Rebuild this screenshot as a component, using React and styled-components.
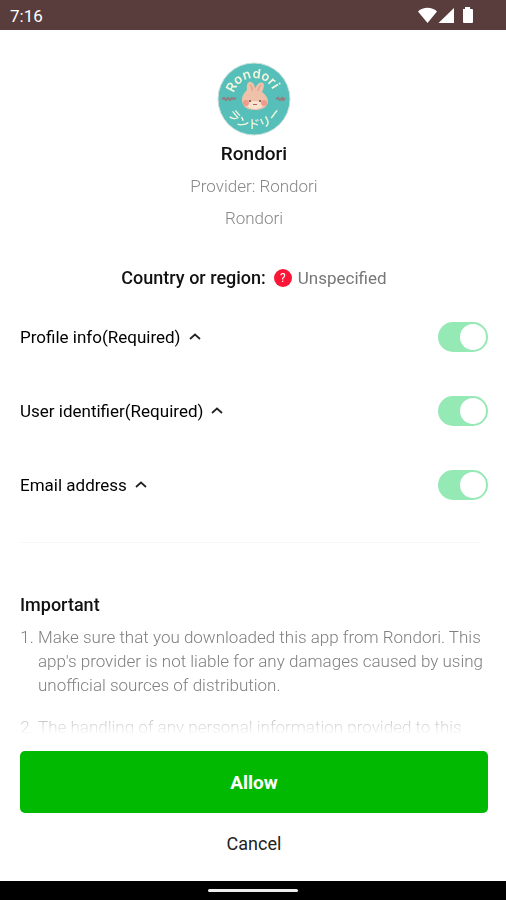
import React, { useState } from "react";
import styled, { createGlobalStyle } from "styled-components";

const permissions = [
  { id: "profile", label: "Profile info(Required)" },
  { id: "identifier", label: "User identifier(Required)" },
  { id: "email", label: "Email address" },
];

const notes = [
  "Make sure that you downloaded this app from Rondori. This app's provider is not liable for any damages caused by using unofficial sources of distribution.",
  "The handling of any personal information provided to this",
];

// letters set around the badge, as [letter, angle]
const topLetters = [
  ["R", -62], ["o", -40], ["n", -17], ["d", 6], ["o", 28], ["r", 46], ["i", 59],
];
const bottomLetters = [
  ["ラ", 50], ["ン", 25], ["ド", 0], ["リ", -26], ["ー", -53],
];

const Logo = () => (
  <LogoSvg viewBox="0 0 74 74" role="img" aria-label="Rondori">
    <circle cx="37" cy="37" r="36" fill="#56bfba" stroke="#c9dfd8" strokeWidth="1" />
    <g fill="#f4f6dc" fontFamily="Inter, sans-serif" fontSize="13" fontWeight="600" textAnchor="middle">
      {topLetters.map(([letter, angle], i) => (
        <text key={i} x="37" y="16" transform={`rotate(${angle} 37 37)`}>{letter}</text>
      ))}
    </g>
    <g fill="#f4f6dc" fontFamily="'Noto Sans CJK JP', sans-serif" fontSize="12" fontWeight="500" textAnchor="middle">
      {bottomLetters.map(([letter, angle], i) => (
        <text key={i} x="37" y="67" transform={`rotate(${angle} 37 37)`}>{letter}</text>
      ))}
    </g>
    <g fill="#f0c1a9">
      <path d="M25 38C25 33 28 30 30 28C29 23 31 19 34 20C37 21 38 24 38 27C39 23 43 19 46 21C48 23 46 28 45 30C49 33 51 36 51 40C50 46 44 48 38 48C31 48 25 45 25 38z" />
      <path d="M33 23q3 2 2 6M44 23q-3 3-3 6" fill="none" stroke="#e2a594" strokeWidth="1.500" />
    </g>
    <ellipse cx="38" cy="43" rx="8" ry="4" fill="#f9e3cf" />
    <circle cx="29" cy="41" r="3" fill="#f09a8b" />
    <circle cx="47" cy="41" r="3" fill="#f09a8b" />
    <circle cx="33" cy="39" r="1" fill="#6d4a48" />
    <circle cx="43" cy="39" r="1" fill="#6d4a48" />
    <path d="M36 42q1 2 2 0q1 2 2 0" fill="none" stroke="#a56a60" strokeWidth="1" />
    <g fill="none" stroke="#8f7f80" strokeWidth="2">
      <path d="M5 37l2-1 2 2 2-2 2 2 2-2 2 1 2-1" />
      <path d="M59 37l2-1 2 2 2-2 1 2 2-2" />
    </g>
  </LogoSvg>
);

const StatusIcons = () => (
  <svg width="56" height="18" viewBox="0 0 56 18" fill="#fff" aria-hidden="true">
    <path d="M0 4.500C5-.4 14-.4 19 4.500L9.500 16z" />
    <path d="M20.500 16L36 1v15z" />
    <path d="M45 2h2V0h5v2h2q1 0 1 1v12q0 1-1 1h-8q-1 0-1-1z" />
  </svg>
);

const Chevron = () => (
  <svg width="12" height="8" viewBox="0 0 12 8" fill="none" stroke="#222" strokeWidth="1.700" aria-hidden="true">
    <path d="M1 6L6 1.500L11 6" />
  </svg>
);

const App = () => {
  const [granted, setGranted] = useState({
    profile: true,
    identifier: true,
    email: true,
  });

  const toggle = (id) => setGranted({ ...granted, [id]: !granted[id] });

  return (
    <Screen>
      <GlobalStyle />
      <StatusBar>
        <span>7:16</span>
        <StatusIcons />
      </StatusBar>
      <Content>
        <Provider>
          <Logo />
          <AppName>Rondori</AppName>
          <ProviderText>Provider: Rondori</ProviderText>
          <ProviderText>Rondori</ProviderText>
        </Provider>
        <Region>
          <strong>Country or region:</strong>
          <QuestionMark>?</QuestionMark>
          <span>Unspecified</span>
        </Region>
        <Permissions>
          {permissions.map(({ id, label }) => (
            <Permission key={id}>
              <label htmlFor={id}>{label}</label>
              <Chevron />
              <Switch
                id={id}
                type="checkbox"
                role="switch"
                checked={granted[id]}
                onChange={() => toggle(id)}
              />
            </Permission>
          ))}
        </Permissions>
        <Divider />
        <Heading>Important</Heading>
        <Notes>
          {notes.map((note) => (
            <li key={note}>{note}</li>
          ))}
        </Notes>
      </Content>
      <Actions>
        <AllowButton type="button">Allow</AllowButton>
        <CancelButton type="button">Cancel</CancelButton>
      </Actions>
      <NavBar>
        <NavHandle />
      </NavBar>
    </Screen>
  );
};

const GlobalStyle = createGlobalStyle`
  * {
    box-sizing: border-box;
  }
  body {
    margin: 0;
    background: #fff;
    color: #111;
    font-family: Roboto, "Liberation Sans", sans-serif;
    font-size: 17px;
  }
`;

const Screen = styled.div`
  display: flex;
  flex-direction: column;
  height: 100vh;
`;

const StatusBar = styled.header`
  display: flex;
  flex: none;
  align-items: center;
  justify-content: space-between;
  height: 30px;
  padding: 2px 32px 0 10px;
  background: #593c3c;
  color: #fff;
`;

const Content = styled.main`
  flex: 1;
  min-height: 0;
  padding: 32px 18px 0 20px;
  overflow: hidden;
  mask-image: linear-gradient(to top, transparent 8px, #000 40px);
`;

const Provider = styled.section`
  display: flex;
  flex-direction: column;
  align-items: center;
`;

const LogoSvg = styled.svg`
  width: 74px;
  height: 74px;
`;

const AppName = styled.h1`
  margin: 4px 0 2px;
  font-size: 19px;
  font-weight: 500;
  line-height: 28px;
`;

const ProviderText = styled.p`
  margin: 0;
  color: #888;
  font-weight: 300;
  line-height: 32px;
`;

const Region = styled.p`
  display: flex;
  align-items: center;
  justify-content: center;
  margin: 32px 0;
  color: #777;
  line-height: 24px;
  strong {
    color: #111;
    font-size: 18px;
    font-weight: 500;
  }
`;

const QuestionMark = styled.span`
  width: 18px;
  height: 18px;
  margin: 0 6px 0 8px;
  border-radius: 50%;
  background: #fb1536;
  color: #fff;
  font-size: 12px;
  line-height: 18px;
  text-align: center;
`;

const Permissions = styled.ul`
  display: grid;
  gap: 44px;
  margin: 0;
  padding: 0;
  list-style: none;
`;

const Permission = styled.li`
  display: flex;
  align-items: center;
  gap: 8px;
  height: 30px;
  color: #000;
`;

const Switch = styled.input`
  appearance: none;
  width: 50px;
  height: 30px;
  margin: 0 0 0 auto;
  padding: 2px;
  border-radius: 15px;
  background: #ddd;
  &::before {
    content: "";
    display: block;
    width: 26px;
    height: 26px;
    border-radius: 50%;
    background: #fff;
  }
  &:checked {
    background: #95e9b5;
  }
  &:checked::before {
    margin-left: 20px;
  }
`;

const Divider = styled.hr`
  height: 1px;
  margin: 42px 8px 48px 0;
  border: 0;
  background: #f8f8f8;
`;

const Heading = styled.h2`
  margin: 0 0 6px;
  font-size: 18px;
  font-weight: 500;
  line-height: 28px;
`;

const Notes = styled.ol`
  margin: 0;
  padding-left: 18px;
  color: #808080;
  font-weight: 300;
  line-height: 24px;
  li {
    margin-bottom: 18px;
  }
`;

const Actions = styled.footer`
  display: flex;
  flex: none;
  flex-direction: column;
  padding: 8px 18px 8px 20px;
`;

const AllowButton = styled.button`
  height: 62px;
  border: 0;
  border-radius: 5px;
  background: #02b902;
  color: #fff;
  font: 700 19px Roboto, sans-serif;
`;

const CancelButton = styled.button`
  height: 60px;
  padding: 0;
  border: 0;
  background: none;
  color: #222;
  font: 400 18px Roboto, sans-serif;
`;

const NavBar = styled.div`
  display: flex;
  flex: none;
  align-items: center;
  justify-content: center;
  height: 19px;
  background: #000;
`;

const NavHandle = styled.div`
  width: 90px;
  height: 3px;
  border-radius: 2px;
  background: #eee;
`;

export default App;
